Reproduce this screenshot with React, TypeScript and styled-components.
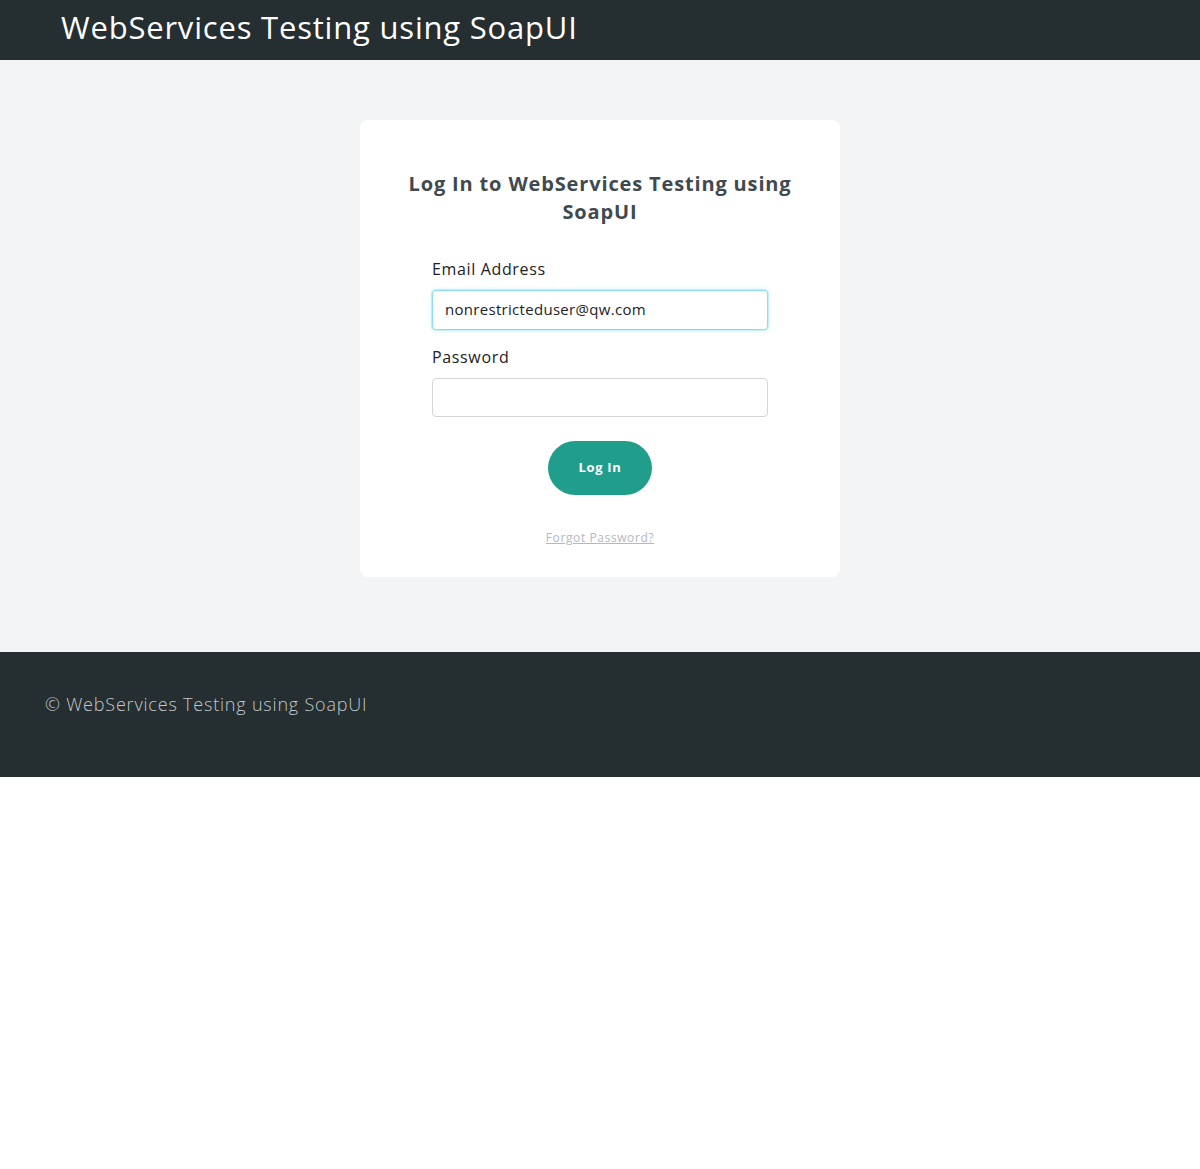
import React from "react";
import styled, { createGlobalStyle } from "styled-components";

const Global = createGlobalStyle`
  html, body { margin: 0; padding: 0; background: #ffffff; }
  body { font-family: "Open Sans", "Noto Sans", sans-serif; }
  * { box-sizing: border-box; }
`;

const Header = styled.header`
  height: 60px;
  background: #252e31;
  display: flex;
  align-items: center;
  padding-left: 61px;
`;

const SiteTitle = styled.h1`
  margin: 0;
  color: #ffffff;
  font-size: 31px;
  font-weight: 400;
  letter-spacing: 0.8px;
  line-height: 1;
  padding-bottom: 6px;
`;

const Main = styled.main`
  background: #f3f4f6;
  padding: 60px 0 75px;
  display: flex;
  justify-content: center;
`;

const Card = styled.section`
  width: 480px;
  background: #ffffff;
  border-radius: 8px;
  padding: 50px 72px 30px;
  display: flex;
  flex-direction: column;
`;

const Heading = styled.h2`
  margin: 0 -30px 31px;
  text-align: center;
  font-size: 20px;
  line-height: 28px;
  font-weight: 700;
  letter-spacing: 0.85px;
  color: #3f4a50;
`;

const Field = styled.div<{ $mb: number }>`
  display: flex;
  flex-direction: column;
  margin-bottom: ${(p) => p.$mb}px;
`;

const Label = styled.label`
  font-size: 16px;
  line-height: 24px;
  letter-spacing: 0.65px;
  color: #1d2224;
  margin-bottom: 9px;
`;

const Input = styled.input<{ $focus?: boolean; $h: number }>`
  height: ${(p) => p.$h}px;
  width: 100%;
  border-radius: 4px;
  border: 1px solid ${(p) => (p.$focus ? "#8fdcf0" : "#d4d6da")};
  box-shadow: ${(p) => (p.$focus ? "0 0 0 1px rgba(143,220,240,0.35), 0 0 4px rgba(143,220,240,0.6)" : "none")};
  padding: 0 12px 2px;
  font-family: inherit;
  font-size: 15px;
  letter-spacing: 0.3px;
  color: #1d2224;
  outline: none;
  background: #ffffff;
`;

const ButtonRow = styled.div`
  display: flex;
  justify-content: center;
  margin-bottom: 34px;
`;

const LoginButton = styled.button`
  width: 104px;
  height: 54px;
  border: none;
  border-radius: 27px;
  background: #219d8c;
  color: #ffffff;
  font-family: inherit;
  font-size: 13px;
  font-weight: 700;
  letter-spacing: 0.7px;
  padding: 0 0 2px;
  cursor: pointer;
`;

const Forgot = styled.a`
  align-self: center;
  font-size: 12px;
  line-height: 18px;
  letter-spacing: 0.6px;
  color: #b3b8c2;
  text-decoration: underline;
`;

const Footer = styled.footer`
  height: 125px;
  background: #252e31;
  display: flex;
  align-items: center;
  padding-left: 45px;
`;

const FooterText = styled.p`
  margin: 0;
  font-size: 18px;
  font-weight: 300;
  letter-spacing: 0.8px;
  color: #c3c7c9;
  padding-bottom: 22px;
`;

export default function App() {
  return (
    <>
      <Global />
      <Header>
        <SiteTitle>WebServices Testing using SoapUI</SiteTitle>
      </Header>
      <Main>
        <Card>
          <Heading>Log In to WebServices Testing using SoapUI</Heading>
          <Field $mb={15}>
            <Label>Email Address</Label>
            <Input $focus $h={40} defaultValue="nonrestricteduser@qw.com" />
          </Field>
          <Field $mb={24}>
            <Label>Password</Label>
            <Input $h={39} type="password" />
          </Field>
          <ButtonRow>
            <LoginButton>Log In</LoginButton>
          </ButtonRow>
          <Forgot href="#">Forgot Password?</Forgot>
        </Card>
      </Main>
      <Footer>
        <FooterText>© WebServices Testing using SoapUI</FooterText>
      </Footer>
    </>
  );
}
